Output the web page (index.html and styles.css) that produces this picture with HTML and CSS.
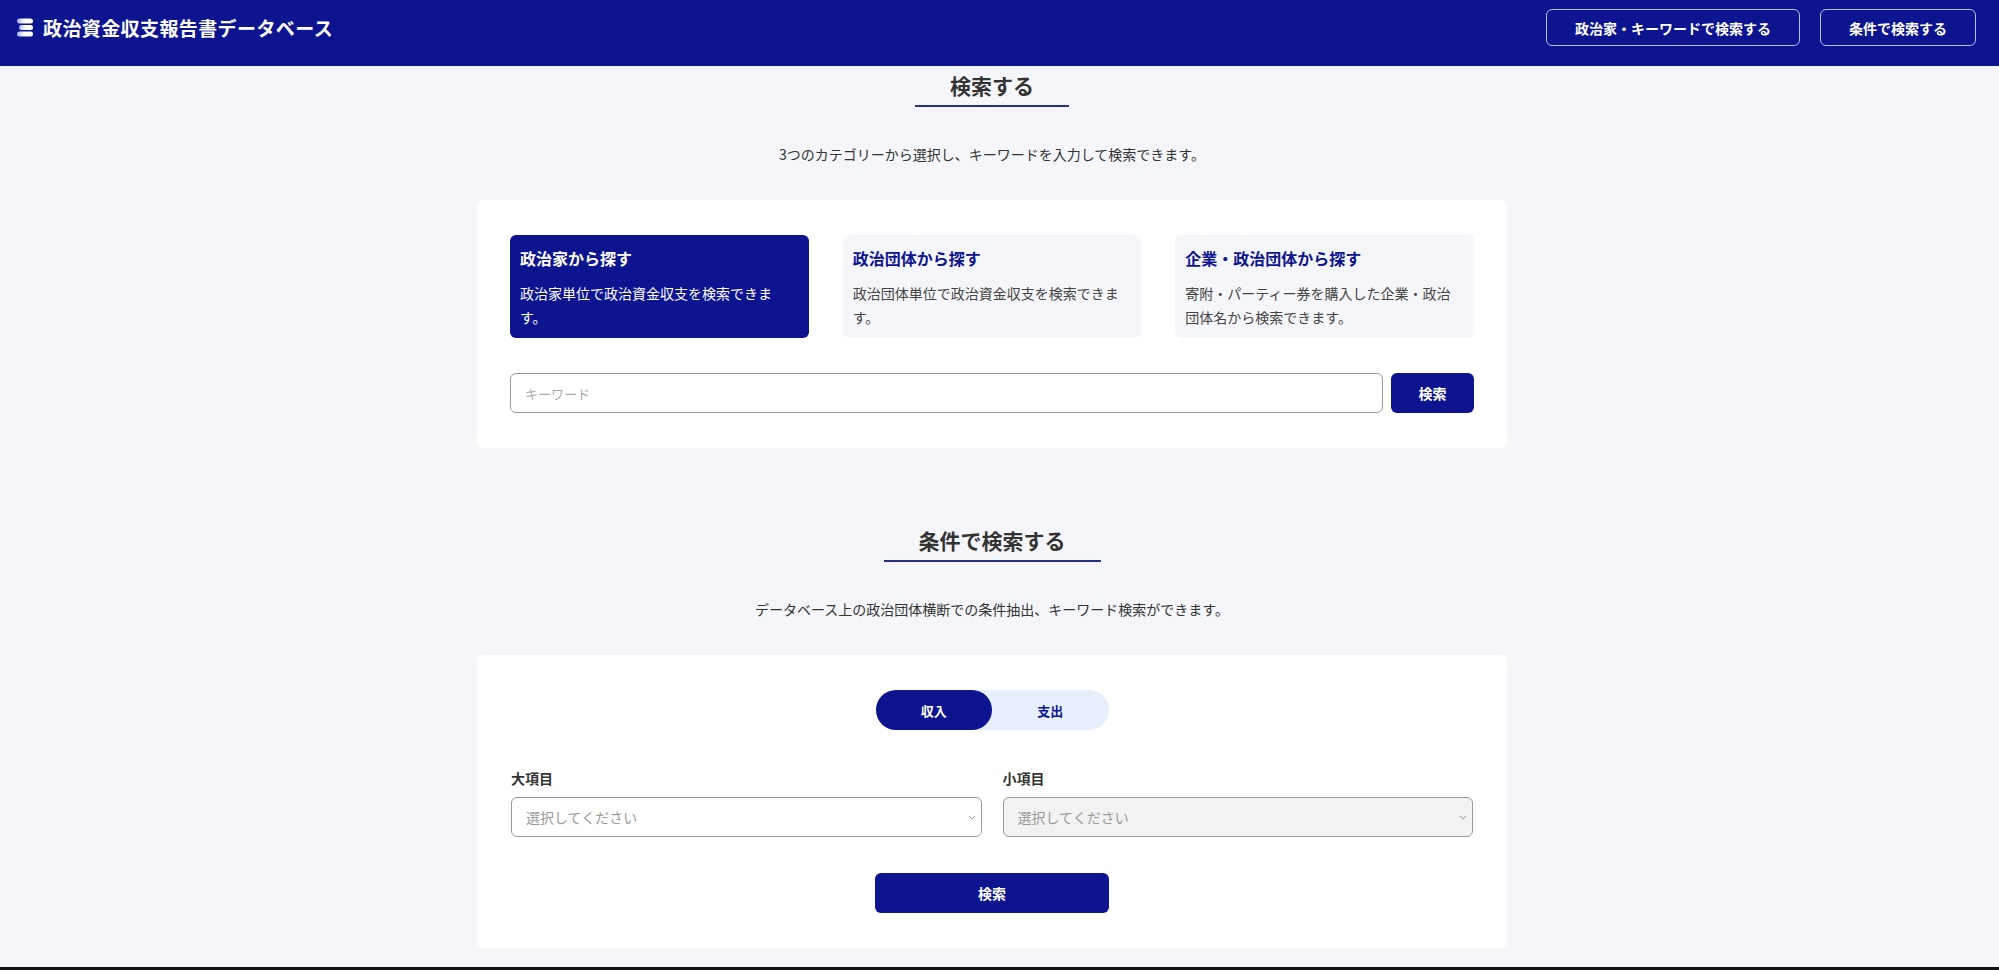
FILE: index.html
```html
<!DOCTYPE html>
<html lang="ja">
<head>
  <meta charset="utf-8">
  <title>政治資金収支報告書データベース</title>
  <link rel="stylesheet" href="styles.css">
</head>
<body>
  <header class="site-header">
    <a class="brand" href="#">
      <svg class="brand-icon" width="17" height="19" viewBox="0 0 17 19">
        <defs>
          <linearGradient id="bar" x1="0" x2="1" y1="0" y2="0">
            <stop offset="0" stop-color="#9fb0ff"/>
            <stop offset="0.45" stop-color="#ffffff"/>
            <stop offset="1" stop-color="#ffffff"/>
          </linearGradient>
        </defs>
        <rect x="0" y="0.5" width="16" height="5" rx="2.5" fill="url(#bar)"/>
        <rect x="2" y="7" width="14" height="5" rx="2.5" fill="url(#bar)"/>
        <rect x="0" y="13.5" width="16" height="5" rx="2.5" fill="url(#bar)"/>
      </svg>
      <span class="brand-name">政治資金収支報告書データベース</span>
    </a>
    <nav class="header-nav">
      <a class="nav-btn" href="#search">政治家・キーワードで検索する</a>
      <a class="nav-btn" href="#condition">条件で検索する</a>
    </nav>
  </header>

  <main class="main">
    <!-- keyword search -->
    <section class="section" id="search">
      <div class="section-head">
        <h2 class="section-title">検索する</h2>
      </div>
      <p class="lead">3つのカテゴリーから選択し、キーワードを入力して検索できます。</p>

      <div class="card">
        <div class="tabs">
          <div class="tab active">
            <div class="tab-title">政治家から探す</div>
            <p class="tab-text">政治家単位で政治資金収支を検索できます。</p>
          </div>
          <div class="tab">
            <div class="tab-title">政治団体から探す</div>
            <p class="tab-text">政治団体単位で政治資金収支を検索できます。</p>
          </div>
          <div class="tab">
            <div class="tab-title">企業・政治団体から探す</div>
            <p class="tab-text">寄附・パーティー券を購入した企業・政治団体名から検索できます。</p>
          </div>
        </div>
        <div class="keyword-row">
          <input type="text" class="keyword-input" placeholder="キーワード">
          <button class="btn-primary btn-small">検索</button>
        </div>
      </div>
    </section>

    <!-- condition search -->
    <section class="section section-second" id="condition">
      <div class="section-head">
        <h2 class="section-title">条件で検索する</h2>
      </div>
      <p class="lead">データベース上の政治団体横断での条件抽出、キーワード検索ができます。</p>

      <div class="card card-condition">
        <div class="toggle-wrap">
          <div class="toggle">
            <button class="toggle-btn on">収入</button>
            <button class="toggle-btn">支出</button>
          </div>
        </div>
        <div class="select-grid">
          <div class="field">
            <label class="field-label">大項目</label>
            <div class="select-box">
              <select class="select">
                <option>選択してください</option>
              </select>
              <svg class="chevron" width="8" height="5" viewBox="0 0 8 5"><path d="M1 1l3 3 3-3" fill="none" stroke="#999" stroke-width="1"/></svg>
            </div>
          </div>
          <div class="field">
            <label class="field-label">小項目</label>
            <div class="select-box">
              <select class="select" disabled>
                <option>選択してください</option>
              </select>
              <svg class="chevron" width="8" height="5" viewBox="0 0 8 5"><path d="M1 1l3 3 3-3" fill="none" stroke="#999" stroke-width="1"/></svg>
            </div>
          </div>
        </div>
        <div class="submit-row">
          <button class="btn-primary btn-wide">検索</button>
        </div>
      </div>
    </section>
  </main>
  <div class="bottom-edge"></div>
</body>
</html>
```

FILE: styles.css
```css
* {
  box-sizing: border-box;
}

body {
  margin: 0;
  background-color: #f5f6fa;
  color: #333;
  font-family: "Noto Sans CJK JP", "Noto Sans", sans-serif;
}

/* header */
.site-header {
  height: 66px;
  background-color: #0c148f;
  display: flex;
  align-items: center;
  justify-content: space-between;
  padding: 0 23px 11px 17px;
}

.brand {
  display: flex;
  align-items: center;
  gap: 9px;
  color: white;
  text-decoration: none;
}

.brand-name {
  font-size: 19px;
  font-weight: bold;
  letter-spacing: 0.4px;
  line-height: 24px;
}

.header-nav {
  display: flex;
  gap: 20px;
}

.nav-btn {
  display: flex;
  align-items: center;
  height: 37px;
  padding: 0 28px;
  border: 1px solid #b8c0f0;
  border-radius: 6px;
  color: white;
  font-size: 14px;
  font-weight: bold;
  text-decoration: none;
}

/* sections */
.main {
  margin-right: 15px;
  padding-top: 4px;
}

.section-second {
  margin-top: 77px;
}

.section-head {
  text-align: center;
}

.section-title {
  display: inline-block;
  margin: 0;
  padding: 0 35px 5px;
  font-size: 21px;
  line-height: 30px;
  font-weight: bold;
  color: #333;
  border-bottom: 2px solid #2a3080;
}

.lead {
  margin: 37px 0 0;
  text-align: center;
  font-size: 14px;
  line-height: 20px;
  color: #333;
}

.card {
  width: 1030px;
  margin: 36px auto 0;
  background-color: white;
  border-radius: 6px;
  padding: 35px 33px;
}

.card-condition {
  padding: 35px 34px;
}

/* category tabs */
.tabs {
  display: flex;
  gap: 34px;
}

.tab {
  flex: 1;
  height: 103px;
  padding: 11px 18px 10px 10px;
  border-radius: 6px;
  background-color: #f5f6f9;
}

.tab-title {
  font-size: 16px;
  font-weight: bold;
  line-height: 24px;
  color: #0c148f;
}

.tab-text {
  margin: 11px 0 0;
  font-size: 14px;
  line-height: 24px;
  color: #444;
}

.tab.active {
  background-color: #0c148f;
}

.tab.active .tab-title,
.tab.active .tab-text {
  color: white;
}

.keyword-row {
  display: flex;
  gap: 8px;
  margin-top: 35px;
}

.keyword-input {
  flex: 1;
  height: 40px;
  padding: 0 14px;
  border: 1px solid #999;
  border-radius: 6px;
  font-family: inherit;
  font-size: 13px;
}

.keyword-input::placeholder {
  color: #aaa;
}

.btn-primary {
  height: 40px;
  border: none;
  border-radius: 6px;
  background-color: #0c148f;
  color: white;
  font-family: inherit;
  font-size: 14px;
  font-weight: bold;
}

.btn-small {
  width: 83px;
}

.btn-wide {
  width: 234px;
}

/* condition search */
.toggle-wrap {
  display: flex;
  justify-content: center;
}

.toggle {
  display: flex;
  width: 233px;
  height: 40px;
  border-radius: 20px;
  background-color: #e7effc;
}

.toggle-btn {
  flex: 1;
  border: none;
  border-radius: 20px;
  background: transparent;
  color: #0c148f;
  font-family: inherit;
  font-size: 13px;
  font-weight: bold;
}

.toggle-btn.on {
  background-color: #0c148f;
  color: white;
}

.select-grid {
  display: grid;
  grid-template-columns: 1fr 1fr;
  gap: 21px;
  margin-top: 38px;
}

.field-label {
  display: block;
  font-size: 14px;
  font-weight: bold;
  line-height: 20px;
  color: #333;
}

.select-box {
  position: relative;
  margin-top: 9px;
}

.select {
  width: 100%;
  height: 40px;
  padding: 0 14px;
  appearance: none;
  border: 1px solid #999;
  border-radius: 6px;
  background-color: white;
  color: #999;
  font-family: inherit;
  font-size: 14px;
}

.select:disabled {
  background-color: #f2f2f2;
  opacity: 1;
}

.chevron {
  position: absolute;
  right: 6px;
  top: 18px;
}

.submit-row {
  display: flex;
  justify-content: center;
  margin-top: 36px;
}

.bottom-edge {
  height: 3px;
  margin-top: 19px;
  background-color: #111;
}
```
